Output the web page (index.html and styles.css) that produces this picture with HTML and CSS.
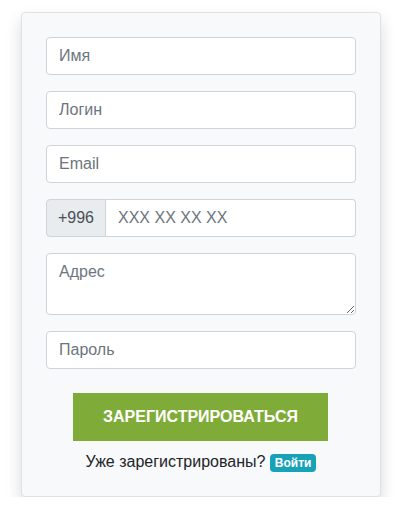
FILE: index.html
```html
<!DOCTYPE html>
<html lang="ru">
<head>
<meta charset="utf-8">
<title>Регистрация</title>
<link rel="stylesheet" href="styles.css">
</head>
<body>
<div class="page">
  <form class="card">
    <input class="field" type="text" placeholder="Имя">
    <input class="field" type="text" placeholder="Логин">
    <input class="field" type="email" placeholder="Email">
    <div class="input-group">
      <span class="prepend">+996</span>
      <input class="field field-phone" type="tel" placeholder="XXX XX XX XX">
    </div>
    <textarea class="field field-area" rows="2" placeholder="Адрес"></textarea>
    <input class="field" type="password" placeholder="Пароль">
    <div class="actions">
      <button class="btn-register" type="button">Зарегистрироваться</button>
    </div>
    <p class="login-line">Уже зарегистрированы? <a class="badge" href="#">Войти</a></p>
  </form>
</div>
</body>
</html>
```
FILE: styles.css
```css
* { box-sizing: border-box; }
html, body { margin: 0; padding: 0; background: #fff; }
body {
  font-family: "Liberation Sans", Arial, sans-serif;
  font-size: 16px;
  line-height: 1.5;
  color: #212529;
}
.page {
  padding: 12px 0 0 21px;
}
.card {
  width: 360px;
  background: #f8f9fa;
  border: 1px solid #dfe1e3;
  border-radius: 4px;
  box-shadow: 0 8px 16px rgba(0, 0, 0, 0.15);
  padding: 24px 24px 22px;
  display: flex;
  flex-direction: column;
  gap: 16px;
  margin: 0;
}
.field {
  display: block;
  width: 100%;
  height: 38px;
  padding: 6px 12px;
  font-family: inherit;
  font-size: 16px;
  line-height: 24px;
  color: #495057;
  background: #fff;
  border: 1px solid #ced4da;
  border-radius: 4px;
  outline: none;
}
.field::placeholder { color: #6c757d; opacity: 1; }
.field-area {
  height: 62px;
  resize: vertical;
}
.input-group {
  display: flex;
  width: 100%;
}
.prepend {
  display: flex;
  align-items: center;
  justify-content: center;
  flex: 0 0 60px;
  height: 38px;
  padding: 6px 0;
  background: #e9ecef;
  border: 1px solid #ced4da;
  border-radius: 4px 0 0 4px;
  color: #495057;
  font-size: 16px;
  line-height: 24px;
}
.field-phone {
  flex: 1;
  min-width: 0;
  border-left: 0;
  border-radius: 0 4px 4px 0;
}
.actions {
  display: flex;
  justify-content: flex-start;
  padding-left: 27px;
  margin-top: 8px;
}
.btn-register {
  width: 255px;
  height: 48px;
  background: #7fac39;
  border: 0;
  border-radius: 0;
  color: #fff;
  font-family: inherit;
  font-size: 16px;
  font-weight: bold;
  text-transform: uppercase;
  line-height: 24px;
  padding: 12px 0;
  cursor: pointer;
}
.login-line {
  margin: -7px 0 0;
  text-align: center;
  line-height: 24px;
}
.badge {
  display: inline-block;
  padding: 3px 5px;
  font-size: 12px;
  font-weight: bold;
  line-height: 1;
  color: #fff;
  background: #17a2b8;
  border-radius: 4px;
  text-decoration: none;
  vertical-align: baseline;
}
```
